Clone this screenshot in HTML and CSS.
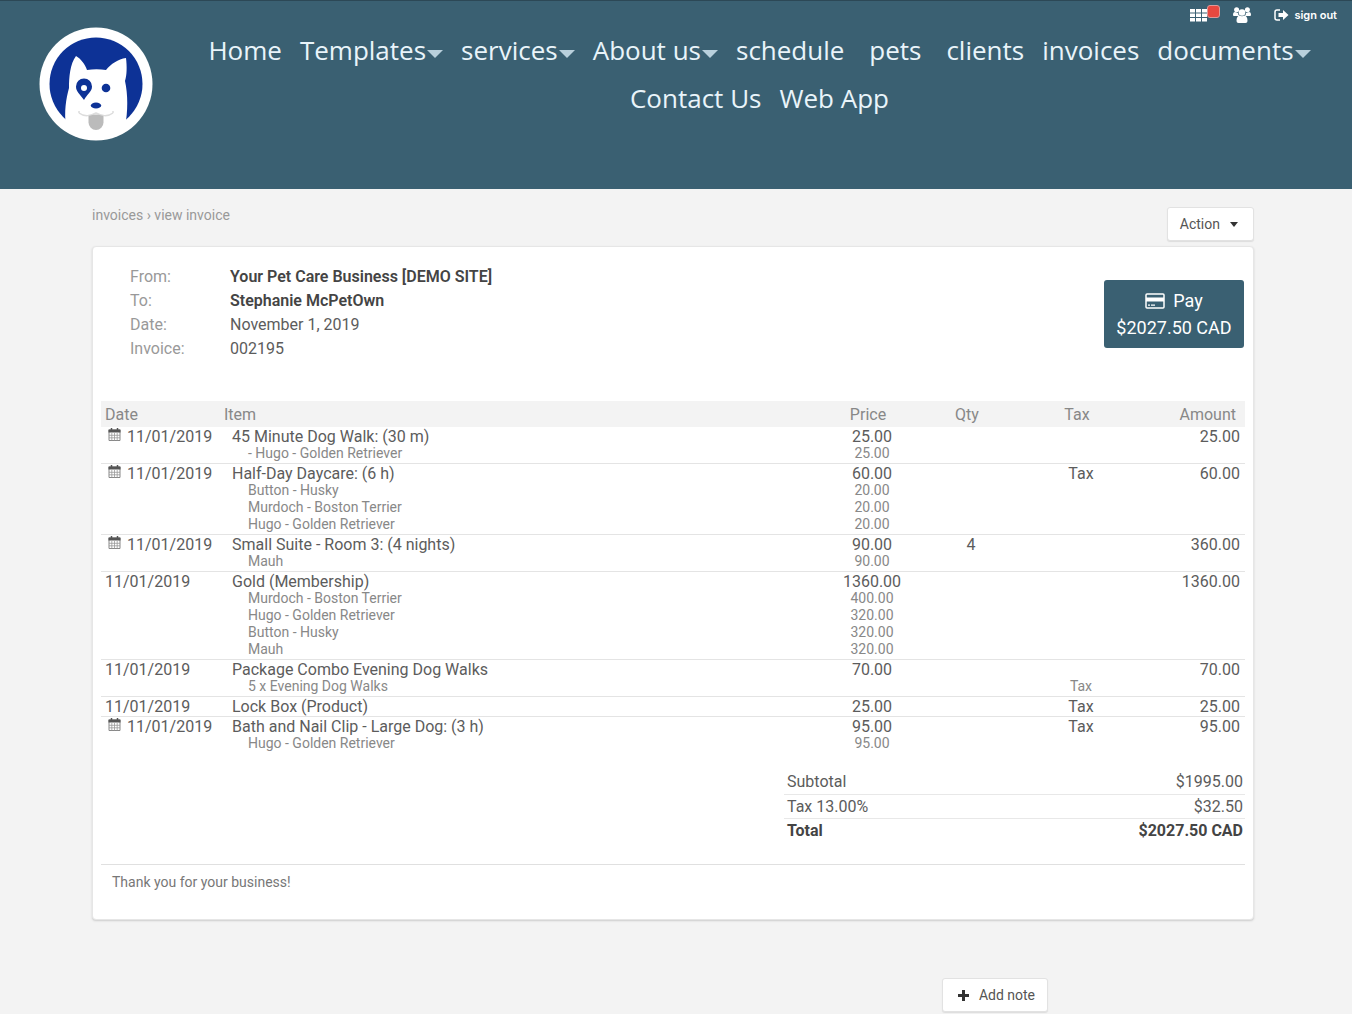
FILE: index.html
```html
<!DOCTYPE html>
<html lang="en">
<head>
    <meta charset="UTF-8">
    <meta name="viewport" content="width=device-width, initial-scale=1.0">
    <title>View Invoice</title>
    <link rel="stylesheet" href="styles.css">
</head>
<body>
    <svg class="sprite" aria-hidden="true">
        <symbol id="calendar" viewBox="0 0 13 13">
            <path d="M1 2h11v10.500H1z" fill="#fff" stroke="#888"/>
            <path d="M.5 1.500h12v3H.5z" fill="#555"/>
            <path d="M3.500 0v3M9.500 0v3" stroke="#555" stroke-width="1.500"/>
            <path d="M3.800 5v7.500M6.500 5v7.500M9.200 5v7.500M1 7.300h11M1 9.800h11" stroke="#999" stroke-width=".8"/>
        </symbol>
    </svg>

    <header class="header">
        <a class="logo" href="#" aria-label="Home page">
            <svg viewBox="0 0 114 114" width="114" height="114">
                <circle cx="57" cy="57" r="56.500" fill="#fff"/>
                <circle cx="57" cy="57" r="46.500" fill="#0d3296"/>
                <path d="M27 100C25 84 27 72 30 61C30 50 31 37 37 29C42 32 46 37 48 43C54 42 61 42 67 43C72 37 79 32 87 31C88 39 88 48 86 54C89 68 89 84 86 100C70 109 43 109 27 100Z" fill="#fff"/>
                <path d="M45 73C41 67 37 65 37 59.500a8 8 0 0 1 16 0C53 65 48 67 45 73Z" fill="#0d3296"/>
                <circle cx="45" cy="61" r="3" fill="#fff"/>
                <circle cx="67" cy="61" r="4.300" fill="#0d3296"/>
                <ellipse cx="57" cy="78.500" rx="5.200" ry="3" fill="#0d3296"/>
                <path d="M40 86c5 4 12 3 17 0c5 3 12 4 17 0M40 86l0-2M74 86l0-2" fill="none" stroke="#ddd" stroke-width="1.500"/>
                <path d="M49.500 89q7.500-3 15 0v6.500a7.500 7.500 0 0 1-15 0z" fill="#bbb"/>
            </svg>
        </a>
        <div class="header-main">
            <div class="user-bar">
                <a class="apps" href="#" aria-label="Apps">
                    <svg viewBox="0 0 17 13" width="17" height="13" fill="#fff">
                        <path d="M0 0h5v3.500H0zM6 0h5v3.500H6zM12 0h5v3.500h-5zM0 4.500h5V8H0zM6 4.500h5V8H6zM12 4.500h5V8h-5zM0 9h5v3.500H0zM6 9h5v3.500H6zM12 9h5v3.500h-5z"/>
                    </svg>
                    <span class="badge"></span>
                </a>
                <a href="#" aria-label="Clients">
                    <svg viewBox="0 0 18 16" width="18" height="16" fill="#fff">
                        <circle cx="3.600" cy="2.800" r="2.500"/>
                        <circle cx="14.400" cy="2.800" r="2.500"/>
                        <circle cx="9" cy="5.500" r="3.300"/>
                        <path d="M0 8q0-3 2-3l3 1q0 2 1.500 3H1Q0 9 0 8zM18 8q0-3-2-3l-3 1q0 2-1.500 3H17q1 0 1-1zM3.500 14q0-5 3-5.500q2.500 1.500 5 0q3 .5 3 5.500q0 2-2 2h-7q-2 0-2-2z"/>
                    </svg>
                </a>
                <a class="sign-out" href="#">
                    <svg viewBox="0 0 15 12" width="15" height="12">
                        <path d="M6 1H3Q1 1 1 3v6q0 2 2 2h3" fill="none" stroke="#fff" stroke-width="1.500"/>
                        <path d="M4.500 4H9V1l5.500 5L9 11V8H4.500z" fill="#fff"/>
                    </svg>
                    sign out
                </a>
            </div>
            <nav class="nav">
                <a href="#">Home</a>
                <a class="has-menu" href="#">Templates</a>
                <a class="has-menu" href="#">services</a>
                <a class="has-menu" href="#">About us</a>
                <a href="#">schedule</a>
                <a href="#">pets</a>
                <a href="#">clients</a>
                <a href="#">invoices</a>
                <a class="has-menu" href="#">documents</a>
                <a href="#">Contact Us</a>
                <a href="#">Web App</a>
            </nav>
        </div>
    </header>

    <main class="page">
        <div class="toolbar">
            <div class="breadcrumb"><a href="#">invoices</a> › <a href="#">view invoice</a></div>
            <button class="btn" type="button">Action <span class="caret"></span></button>
        </div>

        <section class="card">
            <div class="summary">
                <dl class="details">
                    <dt>From:</dt><dd><b>Your Pet Care Business [DEMO SITE]</b></dd>
                    <dt>To:</dt><dd><b>Stephanie McPetOwn</b></dd>
                    <dt>Date:</dt><dd>November 1, 2019</dd>
                    <dt>Invoice:</dt><dd>002195</dd>
                </dl>
                <button class="pay" type="button">
                    <span class="pay-label">
                        <svg viewBox="0 0 20 16" width="20" height="16">
                            <rect x="1" y="1" width="18" height="14" rx="1" fill="none" stroke="#fff" stroke-width="1.500"/>
                            <path d="M1 4.500h18v4H1zM3 11.500h2v1.200H3zM6 11.500h4v1.200H6z" fill="#fff"/>
                        </svg>
                        Pay
                    </span>
                    <span>$2027.50 CAD</span>
                </button>
            </div>

            <table class="items">
                <colgroup>
                    <col class="col-date"><col><col class="col-price"><col class="col-qty"><col class="col-tax"><col class="col-amount">
                </colgroup>
                <thead>
                    <tr><th>Date</th><th>Item</th><th>Price</th><th>Qty</th><th>Tax</th><th>Amount</th></tr>
                </thead>
                <tbody>
                    <tr><td><svg class="cal"><use href="#calendar"/></svg>11/01/2019</td><td>45 Minute Dog Walk: (30 m)</td><td>25.00</td><td></td><td></td><td>25.00</td></tr>
                    <tr class="sub"><td></td><td>- Hugo - Golden Retriever</td><td>25.00</td><td></td><td></td><td></td></tr>
                </tbody>
                <tbody>
                    <tr><td><svg class="cal"><use href="#calendar"/></svg>11/01/2019</td><td>Half-Day Daycare: (6 h)</td><td>60.00</td><td></td><td>Tax</td><td>60.00</td></tr>
                    <tr class="sub"><td></td><td>Button - Husky</td><td>20.00</td><td></td><td></td><td></td></tr>
                    <tr class="sub"><td></td><td>Murdoch - Boston Terrier</td><td>20.00</td><td></td><td></td><td></td></tr>
                    <tr class="sub"><td></td><td>Hugo - Golden Retriever</td><td>20.00</td><td></td><td></td><td></td></tr>
                </tbody>
                <tbody>
                    <tr><td><svg class="cal"><use href="#calendar"/></svg>11/01/2019</td><td>Small Suite - Room 3: (4 nights)</td><td>90.00</td><td>4</td><td></td><td>360.00</td></tr>
                    <tr class="sub"><td></td><td>Mauh</td><td>90.00</td><td></td><td></td><td></td></tr>
                </tbody>
                <tbody>
                    <tr><td>11/01/2019</td><td>Gold (Membership)</td><td>1360.00</td><td></td><td></td><td>1360.00</td></tr>
                    <tr class="sub"><td></td><td>Murdoch - Boston Terrier</td><td>400.00</td><td></td><td></td><td></td></tr>
                    <tr class="sub"><td></td><td>Hugo - Golden Retriever</td><td>320.00</td><td></td><td></td><td></td></tr>
                    <tr class="sub"><td></td><td>Button - Husky</td><td>320.00</td><td></td><td></td><td></td></tr>
                    <tr class="sub"><td></td><td>Mauh</td><td>320.00</td><td></td><td></td><td></td></tr>
                </tbody>
                <tbody>
                    <tr><td>11/01/2019</td><td>Package Combo Evening Dog Walks</td><td>70.00</td><td></td><td></td><td>70.00</td></tr>
                    <tr class="sub"><td></td><td>5 x Evening Dog Walks</td><td></td><td></td><td>Tax</td><td></td></tr>
                </tbody>
                <tbody>
                    <tr><td>11/01/2019</td><td>Lock Box (Product)</td><td>25.00</td><td></td><td>Tax</td><td>25.00</td></tr>
                </tbody>
                <tbody>
                    <tr><td><svg class="cal"><use href="#calendar"/></svg>11/01/2019</td><td>Bath and Nail Clip - Large Dog: (3 h)</td><td>95.00</td><td></td><td>Tax</td><td>95.00</td></tr>
                    <tr class="sub"><td></td><td>Hugo - Golden Retriever</td><td>95.00</td><td></td><td></td><td></td></tr>
                </tbody>
            </table>

            <table class="totals">
                <tr><th>Subtotal</th><td>$1995.00</td></tr>
                <tr><th>Tax 13.00%</th><td>$32.50</td></tr>
                <tr class="total"><th>Total</th><td>$2027.50 CAD</td></tr>
            </table>

            <p class="thanks">Thank you for your business!</p>
        </section>

        <div class="notes">
            <button class="btn" type="button">
                <svg viewBox="0 0 11 11" width="11" height="11"><path d="M5.500 0v11M0 5.500h11" stroke="#333" stroke-width="3"/></svg>
                Add note
            </button>
        </div>
    </main>
</body>
</html>
```
FILE: styles.css
```css
* { box-sizing: border-box; }
body { margin: 0; background: #f3f3f3; color: #5c5c5c; font-family: Roboto, Arial, sans-serif; font-size: 16px; }
a { color: inherit; text-decoration: none; }
button { font-family: inherit; cursor: pointer; }
svg { flex: none; }
.sprite { position: absolute; width: 0; height: 0; }

/* header */
.header { display: flex; min-height: 189px; background: #3a6072; border-top: 1px solid #2c4856; color: #fff; }
.logo { margin: 26px 14px 0 39px; }
.logo svg { display: block; }
.header-main { flex: 1; }
.user-bar { display: flex; justify-content: flex-end; align-items: center; height: 28px; gap: 23px; padding-right: 15px; font-family: Inter, sans-serif; font-size: 11px; font-weight: 600; }
.user-bar svg { display: block; }
.apps { position: relative; margin-right: 3px; }
.badge { position: absolute; top: -4px; left: 17px; width: 13px; height: 13px; border: 1px solid #d99; border-radius: 3px; background: #e8483f; }
.sign-out { display: flex; align-items: center; gap: 5px; }
.nav { display: flex; flex-wrap: wrap; justify-content: center; font-family: "Open Sans", sans-serif; font-size: 26px; line-height: 48px; color: #e9f4fa; margin-top: -3px; }
.nav a { min-width: 84px; padding: 0 9px; text-align: center; }
.has-menu::after { content: ""; display: inline-block; margin-left: 1px; vertical-align: 2px; border: 8px solid transparent; border-top-color: #b9d0dc; border-bottom: 0; }

/* page */
.page { padding: 18px 98px 2px 92px; }
.toolbar { display: flex; justify-content: space-between; margin-bottom: 5px; }
.breadcrumb { color: #999; font-size: 14px; line-height: 16px; }
.btn { display: inline-flex; align-items: center; gap: 10px; height: 34px; padding: 0 12px; border: 1px solid #e2e2e2; border-radius: 3px; background: #fff; color: #555; font-size: 14px; box-shadow: 0 1px 1px #ddd; }
.caret { border: 4px solid transparent; border-top: 5px solid #333; border-bottom: 0; margin-right: 3px; }
.card { padding: 18px 8px 20px; border: 1px solid #e6e6e6; border-radius: 4px; background: #fff; box-shadow: 0 1px 2px #ccc; }

/* from, to, date */
.summary { display: flex; justify-content: space-between; align-items: flex-start; padding: 0 1px 0 29px; margin-bottom: 40px; }
.details { display: grid; grid-template-columns: 100px auto; margin: 0; line-height: 24px; }
.details dt { color: #999; }
.details dd { margin: 0; }
.details b { font-weight: 600; color: #444; }
.pay { display: flex; flex-direction: column; align-items: center; justify-content: center; width: 140px; height: 68px; margin-top: 15px; padding: 0; border: 0; border-radius: 3px; background: #3a6072; color: #fff; font-size: 18px; line-height: 27px; }
.pay-label { display: flex; align-items: center; gap: 8px; }

/* line items */
table { border-collapse: collapse; }
.items { width: 100%; table-layout: fixed; }
.col-date { width: 119px; }
.col-price { width: 100px; }
.col-qty { width: 98px; }
.col-tax { width: 122px; }
.col-amount { width: 107px; }
.items th { height: 26px; padding: 0 4px; background: #f3f3f3; color: #888; font-weight: 400; text-align: center; }
.items td { padding: 1px 4px 0 12px; line-height: 17px; text-align: center; white-space: nowrap; }
.items tbody + tbody { border-top: 1px solid #e4e4e4; }
.items th:nth-child(-n+2), .items td:nth-child(-n+2) { text-align: left; }
.items td:first-child { padding-left: 4px; }
.items th:last-child { padding-right: 9px; text-align: right; }
.items td:last-child { padding-right: 5px; text-align: right; }
.items .sub td { padding-top: 0; color: #888; font-size: 14px; }
.items .sub td:nth-child(2) { padding-left: 28px; }
.items tr:last-child td { padding-bottom: 1px; }
.cal { display: inline-block; width: 13px; height: 13px; margin: 0 6px 0 3px; vertical-align: top; }

.totals { width: 461px; margin: 17px 0 22px auto; }
.totals th, .totals td { height: 24px; padding: 0 3px; font-weight: 400; text-align: left; }
.totals td { padding-right: 2px; text-align: right; }
.totals tr + tr { border-top: 1px solid #e8e8e8; }
.totals .total th, .totals .total td { font-weight: 700; color: #444; }
.thanks { margin: 0; padding: 9px 11px; border-top: 1px solid #e0e0e0; color: #777; font-size: 14px; line-height: 16px; }
.notes { display: flex; justify-content: flex-end; margin-top: 58px; padding-right: 206px; }
.notes .btn { padding-left: 15px; }
```
